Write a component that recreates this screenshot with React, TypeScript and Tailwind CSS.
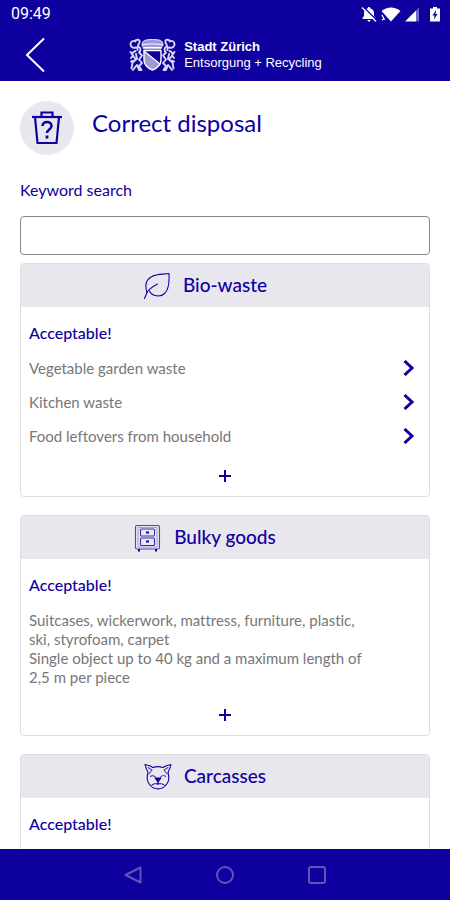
import type React from "react"

interface Category {
  id: string
  title: string
  icon: React.ReactNode
  items?: string[]
  description?: string[]
}

const LeafIcon = () => (
  <svg className="h-7 w-7" viewBox="0 0 28 28" fill="none" stroke="currentColor" strokeWidth="1.1" strokeLinecap="round" strokeLinejoin="round" aria-hidden="true">
    <path d="M1.5 26.500l2.500-6c1.500-3 5-5.500 10.500-8.500" />
    <path d="M4 20.500C1.500 13 3 7.500 9 4.500C14 1.700 20 2.500 26 1.500C26.500 11 25.500 18 21.500 21.500C17.500 25.500 9 24.500 6.500 19" />
  </svg>
)

const CabinetIcon = () => (
  <svg className="h-7 w-7" viewBox="0 0 28 28" fill="none" stroke="currentColor" strokeWidth="1.1" strokeLinejoin="round" aria-hidden="true">
    <rect x="1.5" y="1.5" width="24" height="23.500" rx="1.5" opacity="0.7" />
    <rect x="4" y="3.500" width="19" height="19.500" opacity="0.3" />
    <rect x="6.500" y="5" width="14" height="7" rx="1" opacity="0.8" />
    <rect x="6.500" y="14" width="14" height="7.500" rx="1" opacity="0.8" />
    <path d="M12 8.500h3M12 17.500h3" strokeWidth="1.8" />
    <path d="M5 25v2.500M22 25v2.500" strokeWidth="2" />
  </svg>
)

const AnimalIcon = () => (
  <svg className="h-7 w-7" viewBox="0 0 28 28" fill="none" stroke="currentColor" strokeWidth="1.1" strokeLinecap="round" strokeLinejoin="round" aria-hidden="true">
    <path d="M4 9.500C2.500 6.500 1.500 4 1 1.500C4 2 7 3 9 4.500C12 3.500 16 3.500 19 4.500C21 3 24 2 27 1.500C26.500 4 25.500 6.500 24 9.500C25.500 14 25 19 21.500 22.500C18 27 10 27 6.500 22.500C3 19 2.500 14 4 9.500Z" />
    <path d="M4 4.500l4 2.500-3 4M24 4.500L20 7l3 4" opacity="0.7" />
    <path d="M6.500 13.500c1.500-1.500 3.500-1 5 .5M16.500 14c1.500-1.500 3.500-2 5-.5" opacity="0.7" />
    <path d="M11 15h6L14 19Z" fill="currentColor" />
    <path d="M14 19v2.500M8 22c1.500-2 10.500-2 12 0" />
  </svg>
)

const BinIcon = () => (
  <svg className="h-9 w-8" viewBox="0 0 32 36" fill="none" stroke="currentColor" strokeWidth="2.2" aria-hidden="true">
    <path d="M1 7h30" />
    <path d="M10.500 7V2.500h11V7" />
    <path d="M4 7l2.500 26h19L28 7" />
    <path d="M11.500 16c0-5.500 9-5.500 9 0c0 3.500-4.500 3.500-4.500 7" strokeWidth="2.5" />
    <path d="M16 25.500v3" strokeWidth="2.8" />
  </svg>
)

const CoatOfArms = () => (
  <svg className="h-9 w-12" viewBox="0 0 48 36" fill="none" stroke="currentColor" strokeLinecap="round" strokeLinejoin="round" aria-hidden="true">
    {/* Crown */}
    <path d="M14 7.500c0-4 3-5 10.500-5S35 3.500 35 7.500L33 12H16Z" fill="currentColor" fillOpacity="0.6" strokeWidth="1" strokeOpacity="0.8" />
    <path d="M14 8c4-1.500 17-1.500 21 0M16 10.500h17" strokeWidth="1" />
    {/* Shield */}
    <path d="M16 14l16 13c-1.500 3-4 5-7.500 6c-5-1.500-8.500-5-8.500-10Z" fill="currentColor" fillOpacity="0.6" stroke="none" />
    <path d="M16 13.500h17v9.500c0 5-3.500 8-8.500 10c-5-2-8.500-5-8.500-10Z" strokeWidth="1.4" />
    <path d="M16 14l16 13" strokeWidth="1.2" />
    {/* Lions */}
    <g strokeWidth="1.9" strokeOpacity="0.85">
      <path d="M8 10.500c-4 1-5.500-1-5.500-3.500s3-4 5-2.500M6.500 4c3-2.500 6-1 5 1.500S8.500 10 9.500 13" />
      <path d="M11 10c2 1 2 4 0 5.500l3 3-3 4 3 3.500-3 3 2.500 4H11l-2-5" />
      <path d="M7.500 14c-3 1-4 3-2 5.500l2.500 3-3.500 3-1 6M2.500 15l2.500 3.500L3 21M3 24.500l4-1M8 17l1 5M5 33l3-4" />
      <path d="M41 10.500c4 1 5.500-1 5.500-3.500s-3-4-5-2.500M42.500 4c-3-2.500-6-1-5 1.500S40.500 10 39.500 13" />
      <path d="M38 10c-2 1-2 4 0 5.500l-3 3 3 4-3 3.500 3 3-2.500 4H38l2-5" />
      <path d="M41.500 14c3 1 4 3 2 5.500l-2.500 3 3.500 3 1 6M46.500 15L44 18.500l2 2.500M46 24.500l-4-1M41 17l-1 5M44 33l-3-4" />
    </g>
  </svg>
)

const StatusIcons = () => (
  <div className="flex items-center gap-1">
    <svg className="h-4 w-4" viewBox="0 0 16 16" fill="currentColor" aria-hidden="true">
      <path d="M8 1c.8 0 1.200.5 1.200 1.200C11.500 2.800 13 4.500 13 7v3l1.500 2v1h-13v-1L3 10V7c0-2.500 1.500-4.200 3.800-4.800C6.800 1.500 7.200 1 8 1ZM6.500 14h3c0 2-3 2-3 0Z" />
      <path d="M2.500 1l13 13" stroke="#0f00a0" strokeWidth="1.2" />
      <path d="M1 1.500l14 14" stroke="currentColor" strokeWidth="1.2" />
    </svg>
    <svg className="h-4 w-5" viewBox="0 0 20 16" fill="currentColor" aria-hidden="true">
      <path d="M.5 5C6 .2 14 .2 19.500 5L10 15.500Z" />
      <path d="M1 9l2.500 5M1 14l2.500-1.500" stroke="currentColor" strokeWidth="1.2" />
    </svg>
    <svg className="h-4 w-4" viewBox="0 0 16 16" fill="currentColor" aria-hidden="true">
      <path d="M0 15.500L11 4.500v11Z" />
      <path d="M11 4.500L14 1.500v14h-3Z" opacity="0.4" />
    </svg>
    <svg className="ml-1 h-4 w-3" viewBox="0 0 12 16" aria-hidden="true">
      <path d="M4 1h4v1.500h3V15.500H1V2.500h3Z" fill="currentColor" />
      <path d="M7 4L3.500 9.500h2L5 13.500l3.500-5.500h-2Z" fill="#0f00a0" />
    </svg>
  </div>
)

const ChevronRight = () => (
  <svg className="h-4 w-3" viewBox="0 0 12 16" fill="none" stroke="currentColor" strokeWidth="3" aria-hidden="true">
    <path d="M1.500 1l7.500 7-7.500 7" />
  </svg>
)

const categories: Category[] = [
  {
    id: "bio-waste",
    title: "Bio-waste",
    icon: <LeafIcon />,
    items: ["Vegetable garden waste", "Kitchen waste", "Food leftovers from household"],
  },
  {
    id: "bulky-goods",
    title: "Bulky goods",
    icon: <CabinetIcon />,
    description: [
      "Suitcases, wickerwork, mattress, furniture, plastic, ski, styrofoam, carpet",
      "Single object up to 40 kg and a maximum length of 2,5 m per piece",
    ],
  },
  {
    id: "carcasses",
    title: "Carcasses",
    icon: <AnimalIcon />,
  },
]

const CategoryCard = ({ category }: { category: Category }) => (
  <section className="shrink-0 overflow-hidden rounded-sm border border-[#dedee2]">
    <header className="flex h-[43px] items-center justify-center gap-3 bg-[#e8e7ee] pr-10 text-[#0f00a0]">
      {category.icon}
      <h2 className="pb-0.5 text-[19px] leading-6 font-medium">{category.title}</h2>
    </header>
    <div className="px-2 pt-4 pb-[10px]">
      <h3 className="text-base leading-5 font-medium text-[#0f00a0]">Acceptable!</h3>
      {category.items && (
        <ul className="pt-2">
          {category.items.map((item) => (
            <li key={item}>
              <button className="flex h-[34px] w-full items-center justify-between pr-1.5 text-left text-[15px] text-[#777777]">
                {item}
                <span className="text-[#0f00a0]">
                  <ChevronRight />
                </span>
              </button>
            </li>
          ))}
        </ul>
      )}
      {category.description && (
        <div className="pt-4 pr-12 pb-[5px] text-[15px] leading-[19px] text-[#777777]">
          {category.description.map((line) => (
            <p key={line}>{line}</p>
          ))}
        </div>
      )}
      <button className="mx-auto mt-[13px] flex h-5 w-10 items-center justify-center text-[#0f00a0]" aria-label={`More about ${category.title}`}>
        <svg className="h-3 w-3" viewBox="0 0 12 12" fill="none" stroke="currentColor" strokeWidth="2" aria-hidden="true">
          <path d="M6 0v12M0 6h12" />
        </svg>
      </button>
    </div>
  </section>
)

const App: React.FC = () => {
  return (
    <div className="flex h-screen flex-col bg-white font-['Lato',sans-serif] [font-variant-ligatures:none]">
      <header className="shrink-0 bg-[#0f00a0] text-white">
        <div className="flex h-7 items-center justify-between pr-[9px] pl-[11px]">
          <time className="font-['Roboto',sans-serif] text-base">09:49</time>
          <StatusIcons />
        </div>
        <div className="grid h-[53px] grid-cols-[1fr_auto_1fr] items-center px-5">
          <button className="w-8" aria-label="Back">
            <svg className="h-9 w-8" viewBox="0 0 32 36" fill="none" stroke="currentColor" strokeWidth="2" aria-hidden="true">
              <path d="M24 1.500L7 18l17 16.500" />
            </svg>
          </button>
          <div className="flex items-center gap-2">
            <CoatOfArms />
            <div className="font-['Liberation_Sans',sans-serif] text-[13px] leading-4">
              <p className="font-bold">Stadt Zürich</p>
              <p>Entsorgung + Recycling</p>
            </div>
          </div>
        </div>
      </header>

      <main className="flex flex-1 flex-col overflow-y-auto px-5 pt-5 [scrollbar-width:none]">
        <div className="flex shrink-0 gap-[18px] text-[#0f00a0]">
          <div className="flex h-[54px] w-[54px] items-center justify-center rounded-full bg-[#e8e7ee]">
            <BinIcon />
          </div>
          <h1 className="pt-1 text-2xl leading-9">Correct disposal</h1>
        </div>

        <label htmlFor="keyword" className="mt-[25px] shrink-0 text-base leading-5 text-[#0f00a0]">
          Keyword search
        </label>
        <input id="keyword" type="text" className="mt-4 h-[39px] w-full shrink-0 rounded border border-[#888888] px-2 text-base" />

        <div className="flex shrink-0 flex-col gap-[18px] pt-2 pb-5">
          {categories.map((category) => (
            <CategoryCard key={category.id} category={category} />
          ))}
        </div>
      </main>

      <nav className="flex h-[51px] shrink-0 items-center justify-center gap-[74px] bg-[#0f00a0] text-[#5f55b4]">
        <button aria-label="Back">
          <svg className="h-[18px] w-[18px]" viewBox="0 0 18 18" fill="none" stroke="currentColor" strokeWidth="2" strokeLinejoin="round" aria-hidden="true">
            <path d="M16.500 1.500v15L1.500 9Z" />
          </svg>
        </button>
        <button aria-label="Home">
          <svg className="h-[18px] w-[18px]" viewBox="0 0 18 18" fill="none" stroke="currentColor" strokeWidth="2" aria-hidden="true">
            <circle cx="9" cy="9" r="8" />
          </svg>
        </button>
        <button aria-label="Recent apps">
          <svg className="h-[18px] w-[18px]" viewBox="0 0 18 18" fill="none" stroke="currentColor" strokeWidth="2" aria-hidden="true">
            <rect x="1" y="1" width="16" height="16" rx="2" />
          </svg>
        </button>
      </nav>
    </div>
  )
}

export default App
